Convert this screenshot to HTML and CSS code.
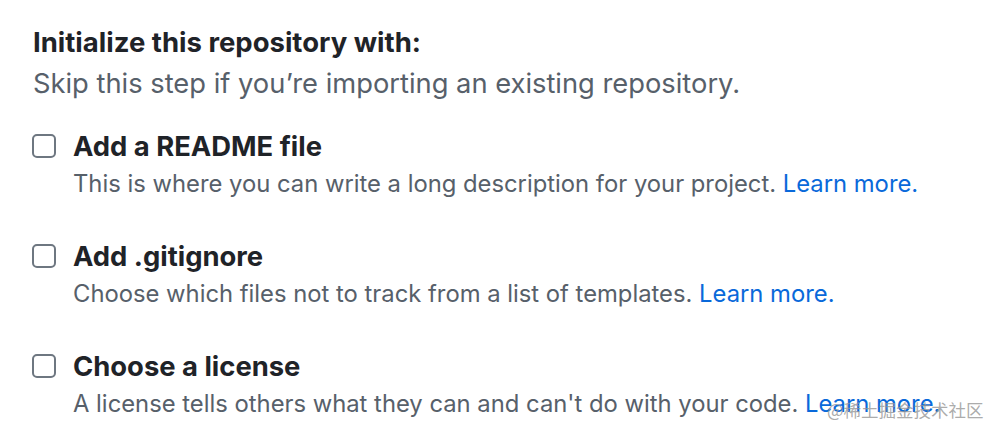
FILE: index.html
```html
<!DOCTYPE html>
<html lang="en">
<head>
<meta charset="utf-8">
<title>Initialize this repository</title>
<link rel="stylesheet" href="styles.css">
</head>
<body>
<div class="section">
  <h3 class="title">Initialize this repository with:</h3>
  <p class="note">Skip this step if you’re importing an existing repository.</p>
  <div class="options">
    <label class="option">
      <span class="box"></span>
      <span class="text">
        <span class="label">Add a README file</span>
        <span class="desc">This is where you can write a long description for your project. <a href="#">Learn more.</a></span>
      </span>
    </label>
    <label class="option">
      <span class="box"></span>
      <span class="text">
        <span class="label">Add .gitignore</span>
        <span class="desc">Choose which files not to track from a list of templates. <a href="#">Learn more.</a></span>
      </span>
    </label>
    <label class="option">
      <span class="box"></span>
      <span class="text">
        <span class="label">Choose a license</span>
        <span class="desc">A license tells others what they can and can't do with your code. <a href="#">Learn more.</a></span>
      </span>
    </label>
  </div>
</div>
<div class="watermark">@稀土掘金技术社区</div>
</body>
</html>
```

FILE: styles.css
```css
html, body {
  margin: 0;
  padding: 0;
  background: #ffffff;
}
body {
  font-family: Inter, "Noto Sans", "Liberation Sans", sans-serif;
  color: #1f2328;
  width: 1004px;
  height: 438px;
  overflow: hidden;
  position: relative;
}
.section {
  padding: 25px 0 0 32px;
}
.title {
  margin: 0 0 0 1px;
  font-size: 27.5px;
  line-height: 34px;
  font-weight: 700;
  color: #1f2328;
  white-space: nowrap;
}
.note {
  margin: 7px 0 0 1px;
  font-size: 27.3px;
  line-height: 36px;
  color: #57606a;
  white-space: nowrap;
}
.options {
  display: flex;
  flex-direction: column;
  gap: 39px;
  margin-top: 27px;
}
.option {
  display: flex;
  align-items: flex-start;
  gap: 17px;
}
.box {
  flex: none;
  width: 20px;
  height: 20px;
  border: 2px solid #6e7781;
  border-radius: 5px;
  margin-top: 5px;
}
.text {
  display: flex;
  flex-direction: column;
}
.label {
  font-size: 27.4px;
  line-height: 34px;
  font-weight: 700;
  color: #1f2328;
  white-space: nowrap;
}
.desc {
  margin-top: 5px;
  font-size: 23.8px;
  line-height: 32px;
  color: #57606a;
  white-space: nowrap;
}
.desc a {
  color: #0969da;
  text-decoration: none;
}
.watermark {
  position: absolute;
  left: 827px;
  top: 398px;
  font-family: "Noto Sans CJK SC", sans-serif;
  font-size: 17.5px;
  line-height: 24px;
  color: rgba(150, 150, 150, 0.8);
  white-space: nowrap;
}
```
